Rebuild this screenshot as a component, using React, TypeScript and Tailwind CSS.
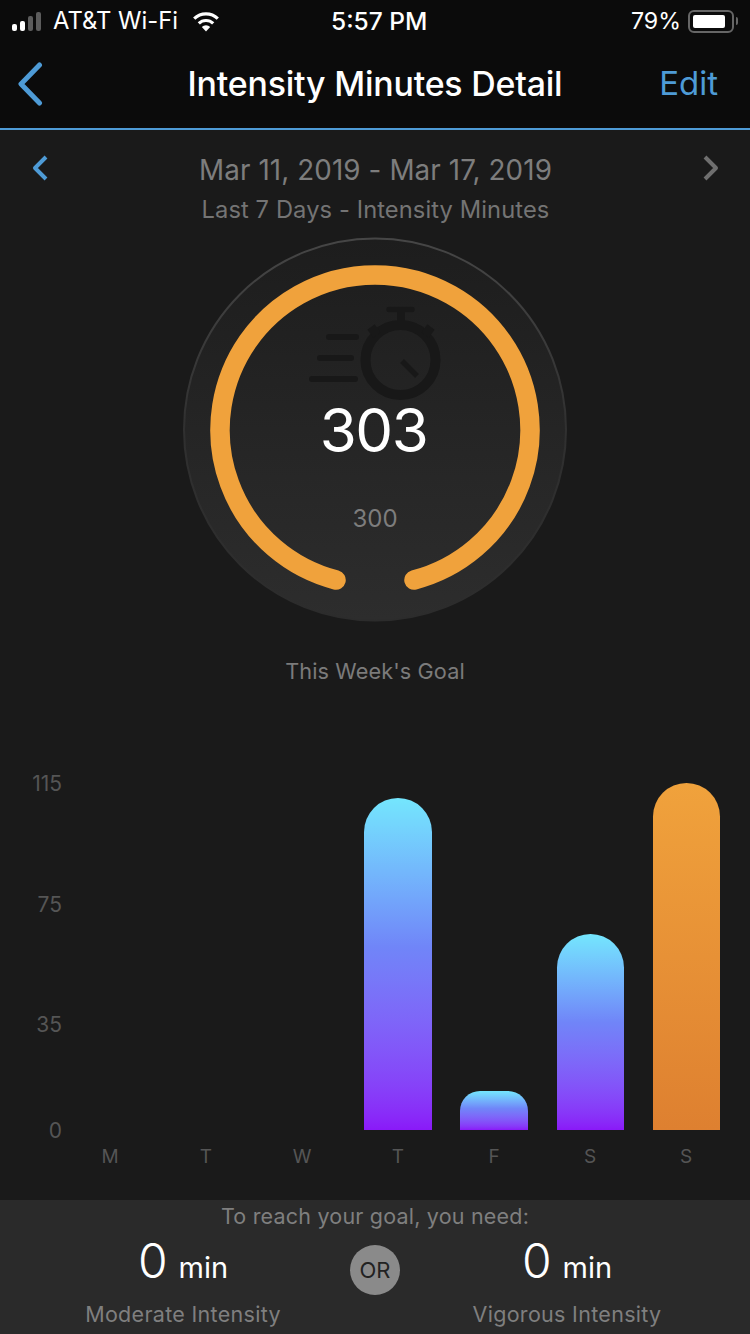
const font = { fontFamily: "Inter, 'Liberation Sans', sans-serif" };

const days = ["M", "T", "W", "T", "F", "S", "S"];
const bars = [
  { height: 0, width: 68 },
  { height: 0, width: 68 },
  { height: 0, width: 68 },
  { height: 332, width: 68 },
  { height: 39, width: 68, radius: 20 },
  { height: 196, width: 67 },
];

const Bar = ({ height, width, orange, radius }: { height: number; width: number; orange?: boolean; radius?: number }) => (
  <div
    className={
      orange
        ? "rounded-t-[34px] bg-gradient-to-b from-[#f0a23c] to-[#de8030]"
        : "rounded-t-[34px] bg-gradient-to-b from-[#74e6fd] via-[#7085f8] via-45% to-[#8a18f8]"
    }
    style={{ height, width, borderTopLeftRadius: radius, borderTopRightRadius: radius }}
  />
);

const Ring = () => (
  <svg width="750" height="392" viewBox="0 234 750 392" className="block">
    <defs>
      <linearGradient id="face" x1="0" y1="0" x2="0" y2="1">
        <stop offset="0" stopColor="#1d1d1d" />
        <stop offset="1" stopColor="#2d2d2d" />
      </linearGradient>
      <linearGradient id="edge" x1="0" y1="0" x2="0" y2="1">
        <stop offset="0" stopColor="#464646" />
        <stop offset="0.5" stopColor="#303030" />
        <stop offset="1" stopColor="#2c2c2c" />
      </linearGradient>
    </defs>
    <circle cx="375" cy="429.5" r="191" fill="url(#face)" stroke="url(#edge)" strokeWidth="2" />
    {/* speed lines */}
    <g stroke="#181818" strokeWidth="6" strokeLinecap="round" fill="none">
      <path d="M329 337H356" />
      <path d="M320 358H351" />
      <path d="M312 379H355" />
    </g>
    {/* stopwatch */}
    <g fill="none" stroke="#181818">
      <circle cx="400.5" cy="360" r="35" strokeWidth="10" />
      <path d="M389 309.5H412" strokeWidth="5.5" strokeLinecap="round" />
      <path d="M401 312V324" strokeWidth="8" />
      <path d="M371 327L377 335" strokeWidth="9" />
      <path d="M431 327L425 335" strokeWidth="9" />
      <path d="M402 361L417 376" strokeWidth="5.5" />
    </g>
    <path
      d="M336 580A155 155 0 1 1 414 580"
      fill="none"
      stroke="#f0a23c"
      strokeWidth="19.5"
      strokeLinecap="round"
    />
  </svg>
);

const Need = ({ label }: { label: string }) => (
  <div className="flex w-[300px] flex-col items-center">
    <div className="flex h-[56px] items-baseline justify-center">
      <span className="text-[48px] leading-[56px] font-light text-white">0</span>
      <span className="ml-[11px] text-[29px] leading-[56px] text-white">min</span>
    </div>
    <div className="mt-[10px] text-[21.5px] leading-[30px] tracking-[0.3px] text-[#7f7f7f]">{label}</div>
  </div>
);

export default function App() {
  return (
    <div className="flex h-[1334px] w-[750px] flex-col overflow-hidden bg-[#1a1a1a]" style={font}>
      {/* Status bar + nav */}
      <div className="h-[130px] border-b-2 border-[#4e9bd6] bg-[#0b0b0b]">
        <div className="flex h-[40px] items-center pt-[2px] pr-[12px] pl-[12px] text-white">
          <div className="flex w-[300px] items-center">
            <div className="flex items-end gap-[3px]">
              <span className="h-[7px] w-[5px] rounded-[2px] bg-white" />
              <span className="h-[10px] w-[5px] rounded-[2px] bg-white" />
              <span className="h-[15px] w-[5px] rounded-[2px] bg-[#5c5c5c]" />
              <span className="h-[19px] w-[5px] rounded-[2px] bg-[#5c5c5c]" />
            </div>
            <span className="ml-[12px] text-[23.8px] leading-[28px]">AT&amp;T Wi-Fi</span>
            <svg width="28" height="21" viewBox="0 0 28 21" className="ml-[14px]">
              <path d="M14 20.5L9.8 16A6 6 0 0 1 18.2 16Z" fill="#fff" />
              <path d="M6.8 12.4A10.4 10.4 0 0 1 21.2 12.4" fill="none" stroke="#fff" strokeWidth="3.2" />
              <path d="M2.2 7.6A17 17 0 0 1 25.8 7.6" fill="none" stroke="#fff" strokeWidth="3.2" />
            </svg>
          </div>
          <span className="ml-[19px] text-[24.5px] leading-[28px] font-medium">5:57 PM</span>
          <div className="ml-auto flex items-center">
            <span className="text-[23.2px] leading-[28px]">79%</span>
            <div className="ml-[7px] h-[23px] w-[46px] rounded-[6px] border-2 border-[#666] p-[3px]">
              <div className="h-full w-[32px] rounded-[2px] bg-white" />
            </div>
            <span className="ml-[2px] h-[8px] w-[2px] rounded-r-[2px] bg-[#666]" />
          </div>
        </div>
        <div className="grid h-[88px] grid-cols-[1fr_auto_1fr] items-center">
          <svg width="26" height="44" viewBox="0 0 26 44" fill="none" className="ml-[17px]">
            <path d="M22.5 3L4 22L22.5 41" stroke="#4e9bd6" strokeWidth="5" strokeLinecap="round" strokeLinejoin="round" />
          </svg>
          <span className="text-[33.9px] font-medium tracking-[-0.2px] text-white">Intensity Minutes Detail</span>
          <span className="mr-[32px] justify-self-end text-[33px] text-[#4e9bd6]">Edit</span>
        </div>
      </div>

      {/* Date range */}
      <div className="flex h-[78px] items-start justify-between pt-[22px] pr-[31px] pl-[32px]">
        <svg width="17" height="26" viewBox="0 0 17 26" fill="none" className="mt-[3px]">
          <path d="M14 2L3 13L14 24" stroke="#4e9bd6" strokeWidth="4" strokeLinejoin="round" />
        </svg>
        <div className="flex flex-col items-center">
          <span className="text-[27.8px] leading-[36px] tracking-[0.1px] text-[#7d7d7d]">Mar 11, 2019 - Mar 17, 2019</span>
          <span className="mt-[7px] text-[23.7px] leading-[30px] tracking-[0.1px] text-[#747474]">Last 7 Days - Intensity Minutes</span>
        </div>
        <svg width="17" height="26" viewBox="0 0 17 26" fill="none" className="mt-[3px]">
          <path d="M3 2L14 13L3 24" stroke="#6f6f6f" strokeWidth="4" strokeLinejoin="round" />
        </svg>
      </div>

      {/* Goal ring */}
      <div className="relative mt-[26px]">
        <Ring />
        <span className="absolute inset-x-0 top-[154px] pr-[3px] text-center text-[60px] leading-[84px] tracking-[-1.5px] text-white">303</span>
        <span className="absolute inset-x-0 top-[269px] text-center text-[24px] leading-[32px] text-[#7d7d7d]">300</span>
      </div>
      <div className="mt-[30px] text-center text-[21.7px] leading-[30px] tracking-[0.1px] text-[#7b7b7b]">This Week's Goal</div>

      {/* Chart */}
      <div className="mt-[97px] flex h-[347px]">
        <div className="-mt-[11px] flex w-[62px] flex-col items-end self-start text-[21px] leading-[24px] text-[#555]">
          <span>115</span>
          <span className="mt-[97px]">75</span>
          <span className="mt-[96px]">35</span>
          <span className="mt-[82px]">0</span>
        </div>
        <div className="grid h-[347px] w-[672px] grid-cols-7">
          {bars.map((b, i) => (
            <div key={i} className="flex items-end justify-center">
              {b.height > 0 && <Bar height={b.height} width={b.width} radius={b.radius} />}
            </div>
          ))}
          <div className="flex items-end justify-center">
            <Bar height={347} width={67} orange />
          </div>
        </div>
      </div>
      <div className="ml-[62px] grid h-[70px] w-[672px] grid-cols-7 pt-[14px] text-center text-[19px] leading-[26px] text-[#555]">
        {days.map((d, i) => (
          <span key={i}>{d}</span>
        ))}
      </div>

      {/* Footer */}
      <div className="flex-1 bg-[#2a2a2a]">
        <div className="pt-[1px] text-center text-[21.5px] leading-[30px] tracking-[0.2px] text-[#7f7f7f]">To reach your goal, you need:</div>
        <div className="mt-[2px] flex items-start pl-[33px]">
          <Need label="Moderate Intensity" />
          <div className="mt-[12px] ml-[17px] flex h-[50px] w-[50px] items-center justify-center rounded-full bg-[#8a8a8a] text-[22px] text-[#222]">
            OR
          </div>
          <div className="ml-[17px]">
            <Need label="Vigorous Intensity" />
          </div>
        </div>
      </div>
    </div>
  );
}
